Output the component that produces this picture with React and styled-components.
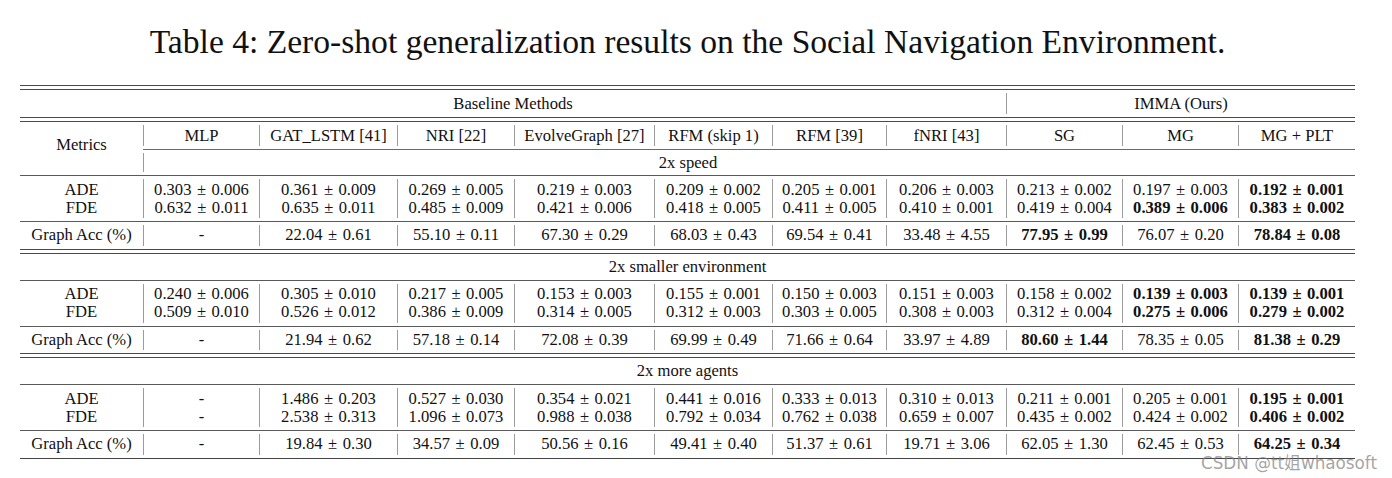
import React from "react";
import styled, { createGlobalStyle } from "styled-components";

const Global = createGlobalStyle`
  html, body { margin: 0; padding: 0; background: #fff; }
  body { font-family: "Liberation Serif", "Times New Roman", serif; color: #111; }
`;

const COLS = [123, 116, 138, 117, 140, 118, 114, 120, 116, 116, 117];

const Page = styled.div`
  position: relative;
  width: 1392px;
  height: 478px;
  overflow: hidden;
  padding: 22px 0 0 20px;
  box-sizing: border-box;
`;

const Wrap = styled.div`
  width: 1335px;
  display: flex;
  flex-direction: column;
`;

const Title = styled.h1`
  margin: 0 0 23px;
  font-weight: normal;
  font-size: 33.6px;
  line-height: 40px;
  height: 40px;
  text-align: center;
  white-space: nowrap;
  color: #111;
`;

const Table = styled.div`
  display: grid;
  grid-template-columns: ${COLS.map((c) => c + "px").join(" ")};
  font-size: 16.6px;
`;

const Rule = styled.div`
  grid-column: ${(p) => p.$span || "1 / -1"};
  height: 0;
  border-top: 1px solid ${(p) => p.$color || "#5a5a5a"};
`;

const DoubleRule = styled.div`
  grid-column: 1 / -1;
  height: 3px;
  border-top: 1px solid #4a4a4a;
  border-bottom: 1px solid #4a4a4a;
`;

const Cell = styled.div`
  grid-column: ${(p) => p.$span || "auto"};
  grid-row: ${(p) => p.$rows || "auto"};
  margin: ${(p) => p.$inset ?? 3}px 0;
  height: ${(p) => p.$h}px;
  display: flex;
  flex-direction: column;
  align-items: center;
  justify-content: center;
  border-left: ${(p) => (p.$sep ? "1px solid #9c9c9c" : "none")};
  padding-right: ${(p) => p.$shift || 0}px;
  padding-bottom: ${(p) => p.$lift || 0}px;
  line-height: 18px;
  white-space: nowrap;
  box-sizing: border-box;
`;

const Line = styled.span`
  display: block;
  font-weight: ${(p) => (p.$bold ? "bold" : "normal")};
`;

const Pm = styled.span`
  margin: 0 5.5px;
`;

const Watermark = styled.div`
  position: absolute;
  left: 1201px;
  top: 450px;
  font-family: "DejaVu Sans", "Noto Sans CJK SC", sans-serif;
  font-size: 16.8px;
  color: rgba(125, 125, 125, 0.7);
  white-space: nowrap;
`;

const HEADERS = [
  "MLP",
  "GAT_LSTM [41]",
  "NRI [22]",
  "EvolveGraph [27]",
  "RFM (skip 1)",
  "RFM [39]",
  "fNRI [43]",
  "SG",
  "MG",
  "MG + PLT",
];

const BLOCKS = [
  {
    name: "2x speed",
    ade: ["0.303±0.006", "0.361±0.009", "0.269±0.005", "0.219±0.003", "0.209±0.002", "0.205±0.001", "0.206±0.003", "0.213±0.002", "0.197±0.003", "*0.192±0.001"],
    fde: ["0.632±0.011", "0.635±0.011", "0.485±0.009", "0.421±0.006", "0.418±0.005", "0.411±0.005", "0.410±0.001", "0.419±0.004", "*0.389±0.006", "*0.383±0.002"],
    acc: ["-", "22.04±0.61", "55.10±0.11", "67.30±0.29", "68.03±0.43", "69.54±0.41", "33.48±4.55", "*77.95±0.99", "76.07±0.20", "*78.84±0.08"],
  },
  {
    name: "2x smaller environment",
    ade: ["0.240±0.006", "0.305±0.010", "0.217±0.005", "0.153±0.003", "0.155±0.001", "0.150±0.003", "0.151±0.003", "0.158±0.002", "*0.139±0.003", "*0.139±0.001"],
    fde: ["0.509±0.010", "0.526±0.012", "0.386±0.009", "0.314±0.005", "0.312±0.003", "0.303±0.005", "0.308±0.003", "0.312±0.004", "*0.275±0.006", "*0.279±0.002"],
    acc: ["-", "21.94±0.62", "57.18±0.14", "72.08±0.39", "69.99±0.49", "71.66±0.64", "33.97±4.89", "*80.60±1.44", "78.35±0.05", "*81.38±0.29"],
  },
  {
    name: "2x more agents",
    ade: ["-", "1.486±0.203", "0.527±0.030", "0.354±0.021", "0.441±0.016", "0.333±0.013", "0.310±0.013", "0.211±0.001", "0.205±0.001", "*0.195±0.001"],
    fde: ["-", "2.538±0.313", "1.096±0.073", "0.988±0.038", "0.792±0.034", "0.762±0.038", "0.659±0.007", "0.435±0.002", "0.424±0.002", "*0.406±0.002"],
    acc: ["-", "19.84±0.30", "34.57±0.09", "50.56±0.16", "49.41±0.40", "51.37±0.61", "19.71±3.06", "62.05±1.30", "62.45±0.53", "*64.25±0.34"],
  },
];

function Value({ v }) {
  const bold = v.startsWith("*");
  const s = bold ? v.slice(1) : v;
  if (!s.includes("±")) return <Line $bold={bold}>{s}</Line>;
  const [a, b] = s.split("±");
  return (
    <Line $bold={bold}>
      {a}
      <Pm>±</Pm>
      {b}
    </Line>
  );
}

function Block({ block, first }) {
  return (
    <>
      {!first && (
        <>
          <Cell $span="1 / -1" $h={20}>
            {block.name}
          </Cell>
          <Rule />
        </>
      )}
      <Cell $h={39}>
        <Line>ADE</Line>
        <Line>FDE</Line>
      </Cell>
      {block.ade.map((v, i) => (
        <Cell key={"r" + i} $sep $h={39}>
          <Value v={v} />
          <Value v={block.fde[i]} />
        </Cell>
      ))}
      <Rule />
      <Cell $h={20.5}>Graph Acc (%)</Cell>
      {block.acc.map((v, i) => (
        <Cell key={"a" + i} $sep $h={20.5}>
          <Value v={v} />
        </Cell>
      ))}
    </>
  );
}

export default function App() {
  return (
    <>
      <Global />
      <Page>
        <Wrap>
          <Title>Table 4: Zero-shot generalization results on the Social Navigation Environment.</Title>
          <Table>
            <DoubleRule />
            <Cell $span="1 / 9" $h={21}>
              Baseline Methods
            </Cell>
            <Cell $span="9 / -1" $sep $h={21}>
              IMMA (Ours)
            </Cell>
            <DoubleRule />
            <Cell $rows="span 3" $inset={0} $h={53} $lift={8}>
              Metrics
            </Cell>
            {HEADERS.map((h) => (
              <Cell key={h} $sep $h={21}>
                {h}
              </Cell>
            ))}
            <Rule $span="2 / -1" $color="#6a6a6a" />
            <Cell $span="2 / -1" $sep $h={19} $shift={123}>
              2x speed
            </Cell>
            <Rule />
            {BLOCKS.map((b, i) => (
              <React.Fragment key={b.name}>
                {i > 0 && <DoubleRule />}
                <Block block={b} first={i === 0} />
              </React.Fragment>
            ))}
            <Rule $color="#444" />
          </Table>
        </Wrap>
        <Watermark>CSDN @tt姐whaosoft</Watermark>
      </Page>
    </>
  );
}
